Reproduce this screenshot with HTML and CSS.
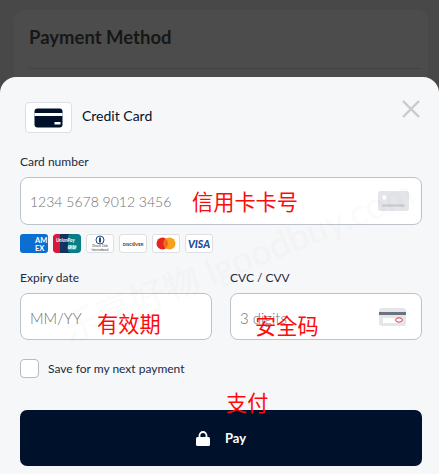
FILE: index.html
```html
<!DOCTYPE html>
<html lang="en">
  <head>
    <meta charset="UTF-8" />
    <title>Payment Method</title>
    <link rel="stylesheet" href="styles.css">
  </head>
  <body>
    <div class="page">
      <div class="bg-card">
        <h1>Payment Method</h1>
        <div class="bg-line"></div>
      </div>

      <div class="sheet">
        <div class="sheet-head">
          <div class="method-icon">
            <svg width="29" height="20" viewBox="0 0 29 20">
              <rect x="0.5" y="0.5" width="28" height="19" rx="3" fill="#00112c"/>
              <rect x="0.5" y="5" width="28" height="3" fill="#fff"/>
              <rect x="20.5" y="14" width="6" height="2.5" fill="#fff"/>
            </svg>
          </div>
          <span class="method-name">Credit Card</span>
          <svg class="close" width="18" height="18" viewBox="0 0 18 18">
            <path d="M1 1L17 17M17 1L1 17" stroke="#c9cacc" stroke-width="2.4" fill="none"/>
          </svg>
        </div>

        <label class="label">Card number</label>
        <div class="input">
          <span class="placeholder">1234 5678 9012 3456</span>
          <svg class="input-icon" width="31" height="20" viewBox="0 0 31 20">
            <rect width="31" height="20" rx="3" fill="#e3e5e8"/>
            <rect x="4.5" y="4.5" width="4" height="4" rx="1" fill="#fff"/>
            <rect x="4.5" y="13.5" width="22" height="2" fill="#c3c8cc"/>
          </svg>
        </div>

        <div class="logos">
          <div class="logo amex">
            <svg width="28" height="19" viewBox="0 0 28 19">
              <text x="15" y="8.5" class="amex-text">AM</text>
              <text x="15" y="16.5" class="amex-text">EX</text>
            </svg>
          </div>
          <div class="logo unionpay">
            <svg width="28" height="19" viewBox="0 0 28 19">
              <rect width="10" height="19" rx="3" fill="#d8193a"/>
              <rect x="7" width="11" height="19" fill="#14325f"/>
              <rect x="15" width="13" height="19" rx="3" fill="#067f86"/>
              <text x="3" y="8" class="up-text">UnionPay</text>
              <text x="14" y="15" class="up-text">银联</text>
            </svg>
          </div>
          <div class="logo">
            <svg width="26" height="17" viewBox="0 0 26 17">
              <circle cx="13" cy="5" r="4" fill="none" stroke="#1d4a80" stroke-width="1"/>
              <rect x="12" y="2.5" width="2" height="5" fill="#1d4a80"/>
              <text x="13" y="12" class="dc-text">Diners Club</text>
              <text x="13" y="15.5" class="dc-text">International</text>
            </svg>
          </div>
          <div class="logo">
            <svg width="26" height="17" viewBox="0 0 26 17">
              <text x="13" y="10.5" class="disc-text">DISCOVER</text>
              <circle cx="14.2" cy="8.5" r="1.6" fill="#f58220"/>
            </svg>
          </div>
          <div class="logo">
            <svg width="20" height="13" viewBox="0 0 20 13">
              <circle cx="6.5" cy="6.5" r="6" fill="#e5261f"/>
              <circle cx="13.5" cy="6.5" r="6" fill="#f9a11b"/>
              <path d="M10 2a6 6 0 0 1 0 9a6 6 0 0 1 0-9Z" fill="#f26522"/>
            </svg>
          </div>
          <div class="logo">
            <span class="visa">VISA</span>
          </div>
        </div>

        <div class="row">
          <div class="col">
            <label class="label">Expiry date</label>
            <div class="input short">
              <span class="placeholder">MM/YY</span>
            </div>
          </div>
          <div class="col">
            <label class="label">CVC / CVV</label>
            <div class="input short">
              <span class="placeholder">3 digits</span>
              <svg class="input-icon cvv-icon" width="27" height="18" viewBox="0 0 27 18">
                <rect width="27" height="18" rx="3" fill="#e4e6ea"/>
                <rect y="4" width="27" height="3" fill="#6b7280"/>
                <rect x="4" y="10" width="19" height="5" fill="#fff"/>
                <ellipse cx="20" cy="12" rx="3.4" ry="2.2" fill="#fff" stroke="#d8343f" stroke-width="1"/>
              </svg>
            </div>
          </div>
        </div>

        <div class="save">
          <div class="checkbox"></div>
          <span>Save for my next payment</span>
        </div>

        <button class="pay">
          <svg width="14" height="15" viewBox="0 0 14 15">
            <path d="M3.5 7V4.5a3.5 3.5 0 0 1 7 0V7" fill="none" stroke="#fff" stroke-width="1.8"/>
            <rect y="6" width="14" height="9" rx="1.5" fill="#fff"/>
          </svg>
          <span>Pay</span>
        </button>
      </div>

      <div class="watermark">乐享好物 lgoodbuy.com</div>

      <span class="note note-card">信用卡卡号</span>
      <span class="note note-expiry">有效期</span>
      <span class="note note-cvv">安全码</span>
      <span class="note note-pay">支付</span>
    </div>
  </body>
</html>
```

FILE: styles.css
```css
* {
  margin: 0;
  padding: 0;
  box-sizing: border-box;
}
html, body {
  height: 100%;
  overflow: hidden;
}
body {
  background-color: #484848;
  font-family: "Lato", "Liberation Sans", sans-serif;
  color: #1c2a3f;
}
.page {
  position: relative;
  width: 439px;
  height: 474px;
  overflow: hidden;
  padding: 10px 11px 0 14px;
}
.bg-card {
  height: 120px;
  background-color: #4c4c4c;
  border-radius: 10px 10px 0 0;
  padding: 16px 7px 0 15px;
}
.bg-card h1 {
  font-size: 18.5px;
  font-weight: 700;
  line-height: 22px;
  color: #171717;
}
.bg-line {
  margin-top: 20px;
  height: 1px;
  background-color: #414141;
}
.sheet {
  position: absolute;
  left: 0;
  top: 77px;
  width: 439px;
  height: 397px;
  background-color: #f6f7f9;
  border-radius: 16px 16px 0 0;
  padding: 25px 17px 0 20px;
}
.sheet-head {
  display: flex;
  align-items: center;
  height: 31px;
  padding-left: 5px;
  margin-bottom: 22px;
}
.method-icon {
  width: 47px;
  height: 31px;
  background-color: #fff;
  border: 1px solid #dcdfe3;
  border-radius: 4px;
  display: flex;
  align-items: center;
  justify-content: center;
}
.method-name {
  margin-left: 10px;
  margin-top: -4px;
  font-size: 14px;
  color: #00112c;
}
.close {
  align-self: flex-start;
  margin-left: auto;
  margin-top: -2px;
  margin-right: 2px;
}
.label {
  display: block;
  font-size: 12px;
  line-height: 14px;
  color: #1c2a3f;
  margin-bottom: 8px;
}
.input {
  height: 48px;
  width: 402px;
  background-color: #fff;
  border: 1px solid #bcc3ca;
  border-radius: 8px;
  display: flex;
  align-items: center;
  padding: 0 9px;
}
.input.short {
  width: 192px;
  height: 47px;
  padding-top: 2px;
}
.input.short .placeholder {
  font-size: 15px;
}
.placeholder {
  font-size: 14px;
  font-weight: 300;
  color: #6f7276;
}
.input-icon {
  margin-left: auto;
  margin-right: 3px;
}
.logos {
  display: flex;
  gap: 5px;
  margin-top: 9px;
  margin-bottom: 18px;
}
.logo {
  width: 28px;
  height: 19px;
  background-color: #fff;
  border: 1px solid #dcdfe3;
  border-radius: 3px;
  display: flex;
  align-items: center;
  justify-content: center;
  overflow: hidden;
}
.logo.amex {
  background-color: #0a6fd0;
  border: none;
}
.logo.unionpay {
  border: none;
}
.amex-text {
  font-size: 7.5px;
  font-weight: 700;
  fill: #fff;
}
.up-text {
  font-size: 4.6px;
  font-weight: 700;
  font-style: italic;
  fill: #fff;
  font-family: "Lato", "Noto Sans CJK SC", sans-serif;
}
.dc-text {
  font-size: 3px;
  fill: #333;
  text-anchor: middle;
}
.disc-text {
  font-size: 4.2px;
  font-weight: 700;
  fill: #333;
  text-anchor: middle;
}
.visa {
  font-size: 10.5px;
  font-weight: 900;
  font-style: italic;
  color: #1a4a9c;
}
.row {
  display: flex;
  gap: 18px;
}
.col {
  width: 192px;
}
.cvv-icon {
  margin-right: 6px;
  margin-top: -2px;
}
.save {
  display: flex;
  align-items: center;
  gap: 9px;
  margin-top: 19px;
  font-size: 12px;
  color: #1c2a3f;
}
.checkbox {
  width: 19px;
  height: 19px;
  background-color: #fff;
  border: 1px solid #b4bcc4;
  border-radius: 4px;
}
.pay {
  width: 402px;
  height: 56px;
  margin-top: 32px;
  background-color: #00112c;
  border: none;
  border-radius: 7px;
  color: #fff;
  font-family: "Lato", "Liberation Sans", sans-serif;
  font-size: 13px;
  font-weight: 700;
  display: flex;
  align-items: center;
  justify-content: center;
  gap: 15px;
}
.watermark {
  position: absolute;
  left: 50px;
  top: 232px;
  font-size: 36px;
  color: #000;
  opacity: 0.012;
  white-space: nowrap;
  transform: rotate(-22deg);
  pointer-events: none;
  font-family: "Lato", "Noto Sans CJK SC", sans-serif;
}
.note {
  position: absolute;
  color: #ff0a0a;
  font-size: 21.2px;
  line-height: 26px;
  font-family: "Noto Sans CJK SC", sans-serif;
  font-weight: 400;
  white-space: nowrap;
}
.note-card {
  left: 192px;
  top: 188px;
}
.note-expiry {
  left: 97px;
  top: 310px;
}
.note-cvv {
  left: 255px;
  top: 312px;
}
.note-pay {
  left: 226px;
  top: 389px;
}
```
